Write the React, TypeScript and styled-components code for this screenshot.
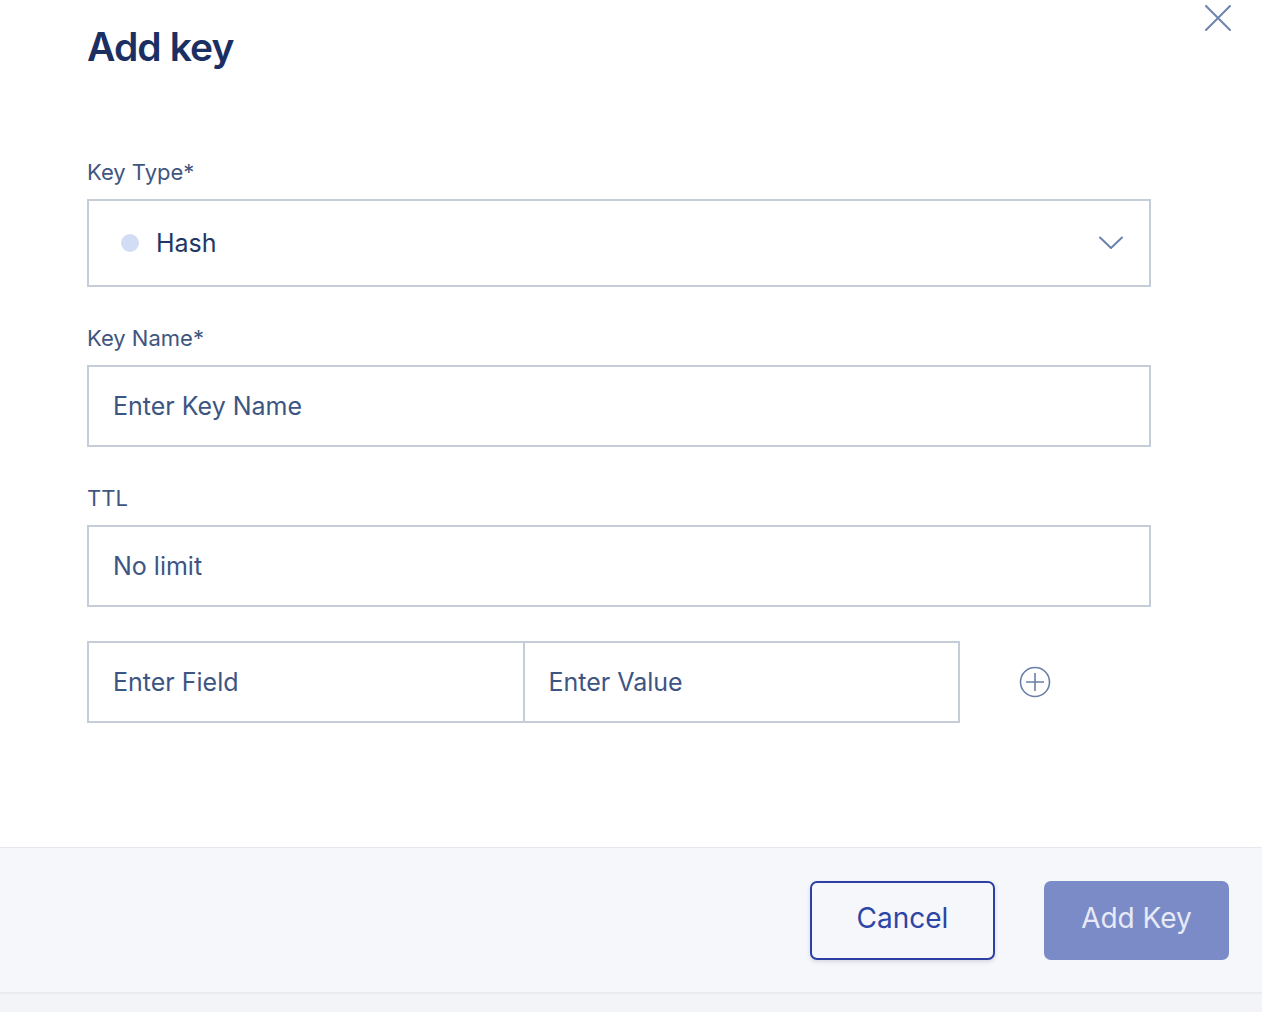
import React from "react";
import styled, { createGlobalStyle } from "styled-components";

const GlobalStyle = createGlobalStyle`
    html, body {
        margin: 0;
        padding: 0;
        background: #f3f4f7;
        font-family: Inter, "Open Sans", sans-serif;
    }
    * {
        box-sizing: border-box;
    }
`;

export default function App() {
    return (
        <>
            <GlobalStyle />
            <Modal>
                <CloseButton aria-label="close">
                    <svg width="26" height="26" viewBox="0 0 26 26">
                        <path d="M1 1 L25 25 M25 1 L1 25" stroke="#6c84ae" strokeWidth="2" strokeLinecap="round" />
                    </svg>
                </CloseButton>
                <Body>
                    <Title>Add key</Title>
                    <Form>
                        <Field>
                            <Label>Key Type*</Label>
                            <Select>
                                <Dot />
                                <SelectValue>Hash</SelectValue>
                                <svg width="24" height="14" viewBox="0 0 24 14">
                                    <path d="M1 1.5 L12 12 L23 1.5" fill="none" stroke="#6a83ad" strokeWidth="2" strokeLinecap="round" strokeLinejoin="round" />
                                </svg>
                            </Select>
                        </Field>
                        <Field>
                            <Label>Key Name*</Label>
                            <Input placeholder="Enter Key Name" />
                        </Field>
                        <Field>
                            <Label>TTL</Label>
                            <Input placeholder="No limit" />
                        </Field>
                        <PairRow>
                            <PairInputs>
                                <PairInput placeholder="Enter Field" />
                                <PairInput placeholder="Enter Value" $last />
                            </PairInputs>
                            <AddButton aria-label="add field">
                                <svg width="32" height="32" viewBox="0 0 32 32">
                                    <circle cx="16" cy="16" r="14.5" fill="none" stroke="#6a7fa8" strokeWidth="1.6" />
                                    <path d="M16 7 V25 M7 16 H25" stroke="#6a7fa8" strokeWidth="1.6" />
                                </svg>
                            </AddButton>
                        </PairRow>
                    </Form>
                </Body>
                <Footer>
                    <OutlineButton>Cancel</OutlineButton>
                    <PrimaryButton disabled>Add Key</PrimaryButton>
                </Footer>
            </Modal>
        </>
    );
}

const Modal = styled.div`
    position: relative;
    width: 1262px;
    display: flex;
    flex-direction: column;
    background: #ffffff;
`;

const CloseButton = styled.button`
    position: absolute;
    top: 5px;
    right: 31px;
    padding: 0;
    border: none;
    background: none;
    cursor: pointer;
    display: flex;
`;

const Body = styled.div`
    padding: 23px 111px 124px 87px;
`;

const Title = styled.h1`
    margin: 0;
    font-size: 39px;
    line-height: 48px;
    font-weight: 600;
    letter-spacing: -0.9px;
    color: #1b2f63;
`;

const Form = styled.div`
    margin-top: 88px;
    display: flex;
    flex-direction: column;
    gap: 38px;
`;

const Field = styled.div`
    display: flex;
    flex-direction: column;
`;

const Label = styled.label`
    font-size: 22px;
    line-height: 26px;
    color: #3f5680;
    margin-bottom: 14px;
`;

const Select = styled.div`
    height: 88px;
    border: 2px solid #c5cdd9;
    display: flex;
    align-items: center;
    padding: 0 26px 0 32px;
    cursor: pointer;
`;

const Dot = styled.span`
    width: 18px;
    height: 18px;
    border-radius: 50%;
    background: #d2ddf5;
    margin-right: 17px;
`;

const SelectValue = styled.span`
    flex: 1;
    font-size: 25px;
    color: #223664;
`;

const Input = styled.input`
    height: 82px;
    border: 2px solid #c5cdd9;
    padding: 0 24px;
    font-family: inherit;
    font-size: 25px;
    color: #223664;
    outline: none;
    &::placeholder {
        color: #3d5583;
    }
`;

const PairRow = styled.div`
    display: flex;
    align-items: center;
    margin-top: -4px;
`;

const PairInputs = styled.div`
    display: flex;
    width: 873px;
`;

const PairInput = styled(Input)<{ $last?: boolean }>`
    flex: 1;
    min-width: 0;
    width: 50%;
    border-left-width: ${(p) => (p.$last ? "0" : "2px")};
`;

const AddButton = styled.button`
    margin-left: 59px;
    padding: 0;
    border: none;
    background: none;
    cursor: pointer;
    display: flex;
`;

const Footer = styled.div`
    display: flex;
    justify-content: flex-end;
    gap: 49px;
    padding: 33px 33px 32px;
    background: #f5f7fb;
    border-top: 1px solid #e5e8ee;
    border-bottom: 2px solid #e9ebf0;
`;

const BaseButton = styled.button`
    width: 185px;
    height: 79px;
    padding: 0 0 5px;
    border-radius: 7px;
    font-family: inherit;
    font-size: 28px;
    cursor: pointer;
`;

const OutlineButton = styled(BaseButton)`
    background: #f5f7fb;
    border: 2px solid #2c41a3;
    color: #2d45a6;
    box-shadow: 0 2px 4px rgba(40, 50, 90, 0.15);
`;

const PrimaryButton = styled(BaseButton)`
    background: #7b8bc8;
    border: none;
    color: #e6eaf7;
    cursor: default;
`;
